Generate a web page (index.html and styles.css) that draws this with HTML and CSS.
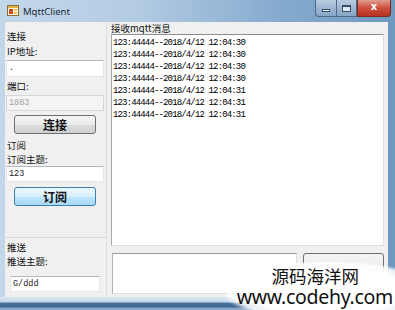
FILE: index.html
```html
<!DOCTYPE html>
<html lang="zh">
<head>
    <meta charset="UTF-8">
    <title>MqttClient</title>
    <link rel="stylesheet" href="styles.css">
</head>
<body>
<div class="window">
    <div class="titlebar">
        <svg class="app-icon" width="12" height="11" viewBox="0 0 12 11">
            <rect x="0.5" y="0.5" width="11" height="10" fill="#fff8e0" stroke="#8a6d3b"/>
            <rect x="1" y="1" width="10" height="2" fill="#e0b040"/>
            <rect x="2" y="4" width="4" height="5" fill="#d2492a"/>
            <rect x="7" y="4" width="3" height="2" fill="#f3c64a"/>
            <rect x="7" y="7" width="3" height="2" fill="#f3c64a"/>
        </svg>
        <span class="title">MqttClient</span>
        <div class="caption">
            <span class="cap cap-min"><i></i></span>
            <span class="cap cap-max"><i></i></span>
            <span class="cap cap-close">x</span>
        </div>
    </div>

    <div class="client">
        <div class="left">
            <div class="group g-conn">
                <div class="lbl">连接</div>
                <div class="lbl">IP地址:</div>
                <div class="box box-ip">.</div>
                <div class="lbl">端口:</div>
                <div class="box box-off">1883</div>
                <button type="button" class="btn">连接</button>
            </div>
            <div class="group g-sub">
                <div class="lbl">订阅</div>
                <div class="lbl">订阅主题:</div>
                <div class="box">123</div>
                <button type="button" class="btn btn-focus">订阅</button>
            </div>
            <div class="group g-pub">
                <div class="lbl">推送</div>
                <div class="lbl">推送主题:</div>
                <div class="box box-topic">G/ddd</div>
            </div>
        </div>

        <div class="right">
            <div class="lbl lbl-recv">接收mqtt消息</div>
            <div class="msgs">
                <div>123:44444--2018/4/12 12:04:30</div>
                <div>123:44444--2018/4/12 12:04:30</div>
                <div>123:44444--2018/4/12 12:04:30</div>
                <div>123:44444--2018/4/12 12:04:30</div>
                <div>123:44444--2018/4/12 12:04:31</div>
                <div>123:44444--2018/4/12 12:04:31</div>
                <div>123:44444--2018/4/12 12:04:31</div>
            </div>
            <div class="send-row">
                <div class="box send-box"></div>
                <button type="button" class="btn send-btn"></button>
            </div>
        </div>
    </div>
    <div class="frame-bottom"></div>

    <div class="watermark">
        <div class="wm-cn">源码海洋网</div>
        <div class="wm-en">www.codehy.com</div>
    </div>
</div>
</body>
</html>
```

FILE: styles.css
```css
* { box-sizing: border-box; }
body {
    margin: 0;
    font-family: "Noto Sans CJK SC", sans-serif;
    background: #6d97bf;
}
.window {
    position: relative;
    width: 395px;
    height: 310px;
    overflow: hidden;
    background: linear-gradient(90deg, #c3d7ea 0%, #b3cbe3 35%, #86abcf 70%, #6f98bf 100%);
}

/* title bar */
.titlebar { height: 22px; display: flex; align-items: flex-start; padding-left: 7px; }
.app-icon { margin-top: 5px; }
.title {
    font-family: "Noto Sans", sans-serif;
    font-size: 9.5px;
    color: #1e2a38;
    margin: 5px 0 0 4px;
}
.caption { margin-left: auto; margin-right: 4px; display: flex; height: 17px; }
.cap {
    display: flex; align-items: center; justify-content: center;
    height: 17px;
    border: 1px solid #4c6a88;
    border-top: 0;
}
.cap-min, .cap-max {
    width: 21px;
    background: linear-gradient(#b9cde0, #9bb6d1 50%, #86a6c6);
}
.cap-min { border-radius: 0 0 0 4px; border-right: 0; }
.cap-min i { width: 8px; height: 3px; background: #fff; border: 1px solid #3b4f66; margin-top: 5px; }
.cap-max i { width: 9px; height: 7px; border: 1px solid #3b4f66; border-top-width: 2px; background: #dfe9f3; }
.cap-close {
    width: 34px;
    border-radius: 0 0 4px 0;
    border-color: #7a2a20;
    background: linear-gradient(#e09c8e, #cd4f3c 50%, #b8321f);
    color: #fff;
    font-family: "DejaVu Sans", sans-serif;
    font-weight: bold;
    font-size: 10px;
    line-height: 1;
    padding-bottom: 3px;
}

/* client area */
.client {
    display: flex;
    height: 275px;
    margin: 0 7px 0 5px;
    background: #f0f0f0;
}
.frame-bottom {
    height: 13px;
    background: linear-gradient(#dae6f1 0, #c4d7ea 5px, #49709a 6px, #3e658e 10px, #88a9c9 11px);
}
.lbl { font-size: 9.5px; line-height: 12px; color: #111; padding-left: 2px; }
.box {
    height: 16px;
    background: #fff;
    border: 1px solid #e2e6ea;
    border-top-color: #b4b8bd;
    font-family: "Liberation Mono", monospace;
    font-size: 8.5px;
    line-height: 14px;
    padding-left: 2px;
    color: #222;
}
.box-off { background: #f4f4f4; color: #a3a3a3; border-color: #d4d7db; }
.btn {
    display: block;
    width: 82px;
    height: 19px;
    margin-left: 9px;
    padding: 0;
    border: 1px solid #707070;
    border-radius: 3px;
    background: linear-gradient(#f4f4f4, #ebebeb 50%, #dddddd 51%, #cfcfcf);
    font-family: "Noto Sans CJK SC", sans-serif;
    font-weight: bold;
    font-size: 12px;
    line-height: 16px;
    color: #111;
}
.btn-focus {
    border-color: #3c7fb1;
    background: linear-gradient(#eaf6fd, #d9f0fc 50%, #bee6fd 51%, #a7d9f5);
}

/* left column */
.left {
    width: 104px;
    display: flex;
    flex-direction: column;
    border-right: 1px solid #dcdcdc;
}
.left .box { margin-left: 1px; width: 98px; }
.group { display: flex; flex-direction: column; }
.g-conn { padding-top: 8px; height: 115px; gap: 3px; }
.g-conn .btn { margin-top: 1px; }
.g-conn .box-ip { height: 17px; margin-top: 0; }
.g-sub { padding-top: 2px; height: 100px; gap: 2px; }
.g-sub .lbl + .box { margin-top: -1px; }
.g-sub .btn { margin-top: 3px; }
.g-pub { flex: 1; padding-top: 3px; border-top: 1px solid #dadada; gap: 2px; }
.g-pub .box-topic { margin: 7px 0 0 5px; width: 90px; }

/* right column */
.right {
    flex: 1;
    display: flex;
    flex-direction: column;
    padding-left: 4px;
    padding-right: 4px;
}
.lbl-recv { padding-left: 0; }
.msgs {
    height: 212px;
    background: #fff;
    border: 1px solid #dedede;
    border-top-color: #8e8e8e;
    border-left-color: #a8a8a8;
    padding: 2px 0 0 1px;
    font-family: "Liberation Mono", monospace;
    font-size: 9px;
    letter-spacing: -0.85px;
    line-height: 12px;
    color: #000;
}
.send-row { display: flex; margin-top: 7px; gap: 6px; }
.send-box { width: 185px; height: 41px; margin-left: 1px; border-color: #dedede; border-top-color: #9a9a9a; border-left-color: #b0b0b0; }
.send-btn { margin-left: 0; width: 81px; height: 41px; }

/* watermark lying over the window */
.watermark {
    position: absolute;
    left: 226px;
    top: 262px;
    width: 169px;
    height: 48px;
    background: radial-gradient(ellipse at 60% 60%, #fff 55%, rgba(255,255,255,0.85) 68%, rgba(255,255,255,0) 75%);
    text-align: right;
    padding-right: 2px;
    color: #111;
}
.wm-cn {
    font-size: 17.5px;
    line-height: 21px;
    padding-right: 34px;
    margin-top: 3px;
}
.wm-en {
    font-family: "Noto Sans", sans-serif;
    font-size: 19.5px;
    line-height: 22px;
    letter-spacing: -0.3px;
}
```
